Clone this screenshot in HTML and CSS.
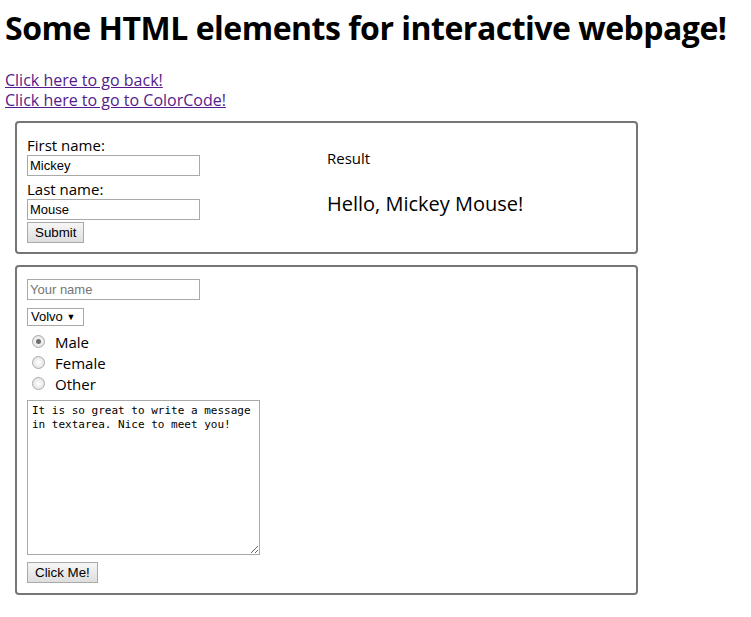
FILE: index.html
```html
<!DOCTYPE html>
<html>
<head>
<meta charset="utf-8">
<link rel="stylesheet" href="styles.css">
</head>
<body>
<h1 class="title">Some HTML elements for interactive webpage!</h1>
<div class="links">
  <a href="#" class="link">Click here to go back!</a><br>
  <a href="#" class="link">Click here to go to ColorCode!</a>
</div>
<div class="box box-one">
  <form class="name-form">
    <label class="lbl">First name:</label>
    <input class="txt" type="text" value="Mickey">
    <label class="lbl lbl-second">Last name:</label>
    <input class="txt" type="text" value="Mouse">
    <button class="btn" type="button">Submit</button>
  </form>
  <div class="result">
    <div class="result-title">Result</div>
    <div class="result-text">Hello, Mickey Mouse!</div>
  </div>
</div>
<div class="box box-two">
  <input class="txt" type="text" placeholder="Your name">
  <div class="sel">Volvo <span class="arrow">&#9660;</span></div>
  <div class="radios">
    <div class="radio-row"><span class="radio checked"></span><span class="rlabel">Male</span></div>
    <div class="radio-row"><span class="radio"></span><span class="rlabel">Female</span></div>
    <div class="radio-row"><span class="radio"></span><span class="rlabel">Other</span></div>
  </div>
  <textarea class="area">It is so great to write a message in textarea. Nice to meet you!</textarea>
  <button class="btn" type="button">Click Me!</button>
</div>
</body>
</html>
```
FILE: styles.css
```css
body {
  margin: 5px;
  font-family: "Open Sans", "Noto Sans CJK KR", sans-serif;
  color: #000;
  background: #fff;
}
.title {
  font-size: 32px;
  font-weight: bold;
  margin: 3px 0 22px 0;
  line-height: 40px;
  letter-spacing: -0.5px;
}
.links {
  font-size: 16px;
  line-height: 20px;
  margin-bottom: 11px;
}
.link {
  color: #551a8b;
}
.box {
  margin-left: 10px;
  border: 2px solid #767676;
  border-radius: 4px;
  padding: 0 0 0 10px;
  box-sizing: border-box;
  width: 623px;
}
.box-one {
  display: flex;
  padding-top: 12px;
  padding-bottom: 9px;
  margin-bottom: 11px;
}
.name-form {
  display: flex;
  flex-direction: column;
  align-items: flex-start;
  width: 300px;
}
.lbl {
  font-size: 15px;
  line-height: 20px;
}
.lbl-second {
  margin-top: 3px;
}
.txt {
  width: 173px;
  height: 21px;
  box-sizing: border-box;
  border: 1px solid #a9a9a9;
  padding: 0 2px;
  font-family: "Liberation Sans", Arial, sans-serif;
  font-size: 13px;
  margin: 0;
}
.txt::placeholder {
  color: #757575;
}
.btn {
  margin-top: 2px;
  height: 21px;
  padding: 0 7px;
  font-family: "Liberation Sans", Arial, sans-serif;
  font-size: 13.33px;
  color: #000;
  border: 1px solid #a9a9a9;
  border-radius: 0;
  background: linear-gradient(#f6f6f6, #dedede);
}
.result {
  padding-top: 13px;
}
.result-title {
  font-size: 15px;
  line-height: 20px;
}
.result-text {
  margin-top: 24px;
  font-size: 20px;
  line-height: 24px;
}
.box-two {
  display: flex;
  flex-direction: column;
  align-items: flex-start;
  padding-top: 12px;
  padding-bottom: 10px;
}
.sel {
  margin-top: 8px;
  height: 18px;
  width: 57px;
  box-sizing: border-box;
  border: 1px solid #a9a9a9;
  font-family: "Liberation Sans", Arial, sans-serif;
  font-size: 13px;
  line-height: 16px;
  padding-left: 3px;
}
.arrow {
  font-size: 9px;
  vertical-align: 1px;
}
.radios {
  margin-top: 5px;
}
.radio-row {
  display: flex;
  align-items: center;
  height: 21px;
}
.radio {
  width: 11px;
  height: 11px;
  border: 1px solid #a9a9a9;
  border-radius: 50%;
  margin: 0 10px 0 5px;
  background: radial-gradient(#fff, #dcdcdc);
  position: relative;
}
.radio.checked::after {
  content: "";
  position: absolute;
  left: 3px;
  top: 3px;
  width: 5px;
  height: 5px;
  border-radius: 50%;
  background: #6d6d6d;
}
.rlabel {
  font-size: 15px;
}
.area {
  margin-top: 6px;
  width: 233px;
  height: 155px;
  box-sizing: border-box;
  border: 1px solid #a9a9a9;
  font-family: "DejaVu Sans Mono", monospace;
  font-size: 11px;
  line-height: 14px;
  padding: 3px 4px;
  resize: both;
}
.box-two .btn {
  margin-top: 7px;
}
```
